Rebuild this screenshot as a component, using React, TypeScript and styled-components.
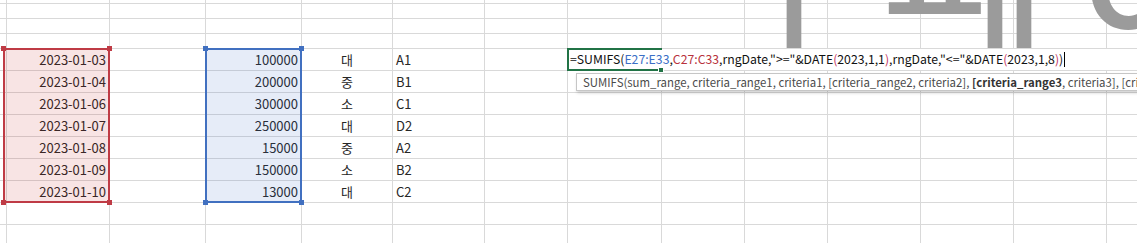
import React from 'react';
import styled, {createGlobalStyle} from 'styled-components';

const GlobalStyle = createGlobalStyle`
  html, body {
    margin: 0;
    padding: 0;
    background: #ffffff;
  }
  body {
    font-family: 'Noto Sans CJK KR', 'Noto Sans', sans-serif;
  }
`

// column / row sizes of the visible sheet area (px)
const COLS = [4, 106, 96, 96, 91, 92, 83, 94, 83, 83, 93, 93, 93, 60]
const ROWS = [4, 15, 15, 15, 22, 22, 22, 22, 22, 22, 22, 22, 22]
const FIRST_DATA_ROW = 4

const dates = ['2023-01-03', '2023-01-04', '2023-01-06', '2023-01-07', '2023-01-08', '2023-01-09', '2023-01-10']
const amounts = ['100000', '200000', '300000', '250000', '15000', '150000', '13000']
const sizes = ['대', '중', '소', '대', '중', '소', '대']
const codes = ['A1', 'B1', 'C1', 'D2', 'A2', 'B2', 'C2']

type Align = 'left' | 'center' | 'right'

const cellValue = (row: number, col: number): {text: string, align: Align} | null => {
    const i = row - FIRST_DATA_ROW
    if (i < 0 || i >= dates.length) return null
    if (col === 1) return {text: dates[i], align: 'right'}
    if (col === 3) return {text: amounts[i], align: 'right'}
    if (col === 4) return {text: sizes[i], align: 'center'}
    if (col === 5) return {text: codes[i], align: 'left'}
    return null
}

export default function App() {
    return (
        <>
            <GlobalStyle/>
            <Page>
                <Sheet>
                    {ROWS.map((_, r) =>
                        COLS.map((__, c) => {
                            const v = cellValue(r, c)
                            return (
                                <Cell key={`${r}-${c}`} $row={r + 1} $col={c + 1} $align={v?.align ?? 'left'}>
                                    {v?.text}
                                </Cell>
                            )
                        })
                    )}

                    <Range $col={2} $color={'#bf3b45'} $fill={'rgba(200, 40, 40, 0.125)'}>
                        <Handle $v={'top'} $h={'left'} $color={'#bf3b45'}/>
                        <Handle $v={'top'} $h={'right'} $color={'#bf3b45'}/>
                        <Handle $v={'bottom'} $h={'left'} $color={'#bf3b45'}/>
                        <Handle $v={'bottom'} $h={'right'} $color={'#bf3b45'}/>
                    </Range>

                    <Range $col={4} $color={'#4170c0'} $fill={'rgba(60, 110, 200, 0.13)'}>
                        <Handle $v={'top'} $h={'left'} $color={'#4170c0'}/>
                        <Handle $v={'top'} $h={'right'} $color={'#4170c0'}/>
                        <Handle $v={'bottom'} $h={'left'} $color={'#4170c0'}/>
                        <Handle $v={'bottom'} $h={'right'} $color={'#4170c0'}/>
                    </Range>

                    <ActiveCell>
                        <Editor>
                            =SUMIFS(<Ref $color={'#3b6fc6'}>E27:E33</Ref>,<Ref $color={'#b8323c'}>C27:C33</Ref>,rngDate,"&gt;="&amp;DATE<Paren>(</Paren>2023,1,1<Paren>)</Paren>,rngDate,"&lt;="&amp;DATE<Paren>(</Paren>2023,1,8<Paren>)</Paren>)
                            <Caret/>
                        </Editor>
                        <FillHandle/>
                        <Hint>
                            SUMIFS(sum_range, criteria_range1, criteria1, [criteria_range2, criteria2], <b>[criteria_range3</b>, criteria3], [criteria_range4, criteria4], ...)
                        </Hint>
                    </ActiveCell>
                </Sheet>

                <TextObject>
                    <Glyph $x={743} $y={-41}>ㅣ</Glyph>
                    <Glyph $x={884} $y={-72}>ㅛ</Glyph>
                    <Glyph $x={944} $y={-41}>ㅣ</Glyph>
                    <Glyph $x={973} $y={-41}>ㅣ</Glyph>
                    <Glyph $x={1085} $y={-75}>C</Glyph>
                </TextObject>
            </Page>
        </>
    )
}

const Page = styled.div`
  position: relative;
  width: 1137px;
  height: 243px;
  overflow: hidden;
  background: #ffffff;
`

const Sheet = styled.div`
  display: grid;
  grid-template-columns: ${COLS.map(w => `${w}px`).join(' ')};
  grid-template-rows: ${ROWS.map(h => `${h}px`).join(' ')};
`

const Cell = styled.div<{$row: number, $col: number, $align: Align}>`
  grid-row: ${p => p.$row};
  grid-column: ${p => p.$col};
  box-sizing: border-box;
  border-right: 1px solid #d9d9d9;
  border-bottom: 1px solid #d9d9d9;
  display: flex;
  align-items: center;
  justify-content: ${p => p.$align === 'right' ? 'flex-end' : p.$align === 'center' ? 'center' : 'flex-start'};
  padding: 0 3px;
  font-size: 13px;
  line-height: 1;
  color: #262626;
  white-space: nowrap;
  overflow: hidden;
`

const Range = styled.div<{$col: number, $color: string, $fill: string}>`
  grid-column: ${p => p.$col};
  grid-row: 5 / 12;
  margin: -1px 0 0 -1px;
  border: 2px solid ${p => p.$color};
  background: ${p => p.$fill};
  position: relative;
  z-index: 1;
  pointer-events: none;
`

const Handle = styled.span<{$v: 'top' | 'bottom', $h: 'left' | 'right', $color: string}>`
  position: absolute;
  ${p => p.$v}: -4px;
  ${p => p.$h}: -4px;
  width: 5px;
  height: 5px;
  background: ${p => p.$color};
`

const ActiveCell = styled.div`
  grid-row: 5;
  grid-column: 8;
  margin: -1px 0 0 -1px;
  position: relative;
  z-index: 3;

  &::after {
    content: '';
    position: absolute;
    inset: 0;
    border: 2px solid #217346;
    border-right: none;
    z-index: 2;
    pointer-events: none;
  }
`

const Editor = styled.div`
  position: absolute;
  left: 2px;
  top: 1px;
  bottom: 1px;
  width: 537px;
  background: #ffffff;
  display: flex;
  align-items: center;
  padding-left: 1px;
  font-size: 12.25px;
  line-height: 1;
  color: #111111;
  white-space: pre;
`

const Ref = styled.span<{$color: string}>`
  color: ${p => p.$color};
`

const Paren = styled.span`
  color: #c3325e;
`

const Caret = styled.span`
  display: inline-block;
  width: 1px;
  height: 15px;
  margin-left: 1px;
  background: #000000;
`

const FillHandle = styled.span`
  position: absolute;
  right: -2px;
  bottom: -2px;
  width: 4px;
  height: 4px;
  background: #217346;
  border: 1px solid #ffffff;
  z-index: 3;
`

const Hint = styled.div`
  position: absolute;
  left: 9px;
  top: 25px;
  z-index: 4;
  height: 16px;
  line-height: 16px;
  padding: 0 6px;
  background: #ffffff;
  border: 1px solid #c6c6c6;
  box-shadow: 1px 2px 3px rgba(0, 0, 0, 0.18);
  font-size: 11.4px;
  color: #4a4a4a;
  white-space: nowrap;

  b {
    color: #333333;
    font-weight: 700;
  }
`

// floating text box object on the sheet; only its lower edge is in view
const TextObject = styled.div`
  position: absolute;
  top: 0;
  left: 0;
  right: 0;
  height: 48px;
  overflow: hidden;
  z-index: 2;
  pointer-events: none;
  font-family: 'Noto Sans CJK KR', sans-serif;
  font-weight: 700;
  font-size: 110px;
  line-height: 1;
  color: #9b9b9b;
`

const Glyph = styled.span<{$x: number, $y: number}>`
  position: absolute;
  left: ${p => p.$x}px;
  top: ${p => p.$y}px;
`
